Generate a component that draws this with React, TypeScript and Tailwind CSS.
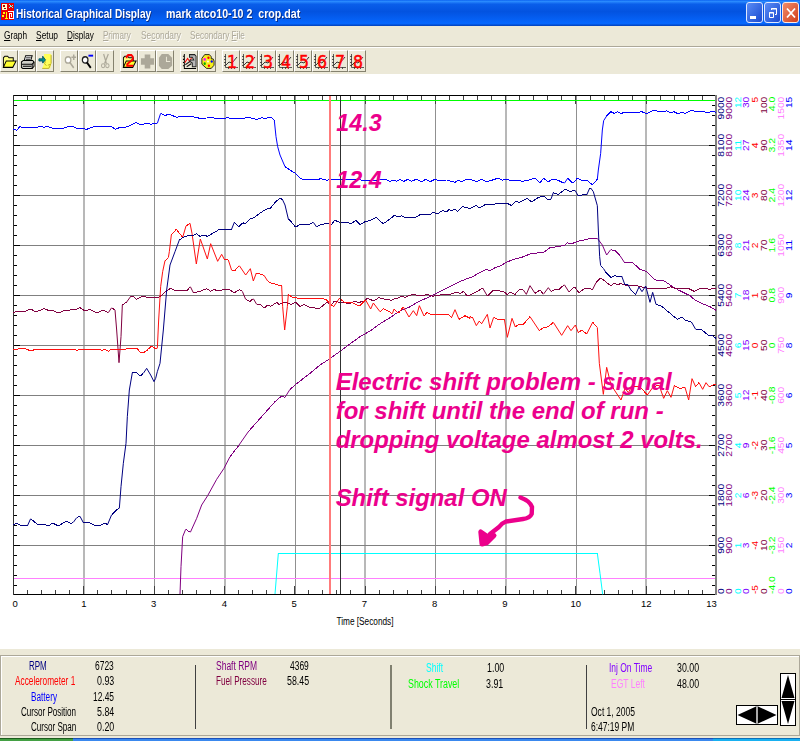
import { useLayoutEffect, useRef, useState, type ReactNode } from "react";

/* Text squeezed or stretched horizontally to an exact width. */
function Fit({ w, className = "", children }: { w: number; className?: string; children: ReactNode }) {
  const ref = useRef<HTMLSpanElement>(null);
  const [scale, setScale] = useState(1);
  useLayoutEffect(() => {
    if (ref.current) setScale(w / ref.current.offsetWidth);
  }, [w]);
  return (
    <span className={"block shrink-0 whitespace-pre " + className} style={{ width: w }}>
      <span ref={ref} className="inline-block origin-left" style={{ transform: `scaleX(${scale})` }}>
        {children}
      </span>
    </span>
  );
}

/* ---------- trace data: each run is [originX, originY, points in thirds of a pixel] ---------- */
type Run = [number, number, string];

const battery: Run[] = [
  [0, 90, "40,118 50,121 60,109 68,114 77,112 100,112 104,114 123,109 133,112 143,109 158,115 190,115 206,109 216,109 236,117 245,115 260,118 284,109 292,111 306,109 333,109 347,118 360,112 378,111 392,106 408,97 422,105 440,100 453,103 460,100 472,100 482,70 495,76 509,73 530,82 540,79 573,79 600,85 620,84 633,81 645,85 676,85 683,82"],
  [230, 90, "0,85 40,85 53,82 80,88 95,83 105,86 117,82 125,83 133,92 138,140 143,170 150,195 165,230 180,240 196,250 215,268 265,268 272,266 292,271 300,268 390,268 395,271 440,271 450,268 470,270 480,274 490,271 500,274 510,269 522,274 533,268 545,274 558,268 575,275 587,268 600,275 615,268 625,271 650,270 675,277 685,270 695,275 710,267"],
  [470, 90, "0,268 20,275 35,268 48,275 65,271 85,264 97,271 110,267 120,271 142,270 158,274 182,269 195,264 209,279 221,265 235,276 247,267 262,270 283,280 293,265 308,280 322,265 333,270 350,270 367,284 382,268 385,240 392,190 397,120 401,92 410,78 423,65 432,70 443,65 453,70 462,68 500,68 515,65 530,71 550,61 578,66 590,62 602,68 612,65 625,72 637,66 645,70 665,61 680,65 700,65 715,68 725,63 738,67"],
];
const rpm: Run[] = [
  [0, 350, "40,524 50,520 60,525 82,528 92,506 112,523 133,523 145,528 158,519 175,528 198,514 213,520 220,517 230,503 240,499 250,518 266,517 288,528 303,525 312,520 323,523 335,494 348,481 358,475 363,410 370,340 378,280 382,200 388,120 397,68 408,67 421,78 430,70 440,55 452,75 462,95 467,85 472,65 480,40 484,0"],
  [0, 90, "490,720 500,600 510,525 525,485 538,450 550,442 565,436 580,436 589,431 600,439 608,435 623,439 640,429 655,420 680,417"],
  [230, 90, "5,417 13,397 27,410 38,398 45,401 62,386 72,383 95,366 112,356 122,354 138,334 152,324 158,330 165,345 175,387 185,397 197,412 207,405 238,403 250,397 260,411 272,404 295,400 303,405 314,391 328,396 365,400 377,391 390,404 405,395 420,392 440,382 450,393 460,401 480,387 493,376 505,381 515,377 527,383 558,381 570,374 603,372 610,366 622,372 637,362 650,365 657,359 665,362 675,357 683,364 698,350"],
  [470, 90, "0,356 18,346 29,354 45,344 65,345 80,340 112,340 125,347 137,334 148,337 172,325 185,336 205,322 221,318 232,328 243,327 250,308 265,313 285,298 300,304 315,301 325,318 345,312 350,315 358,297 362,294 370,305 382,347 385,420 389,500 392,527 400,535 407,546 423,562 435,556 445,561 455,558 465,585 473,583 484,602 497,613 507,591 516,605 527,588 540,637 548,607 558,643 575,649 622,688 635,681 645,690 665,697 677,718 695,719 715,736 728,737 738,745"],
];
const accel: Run[] = [
  [0, 90, "40,780 68,774 78,777 93,783 106,778 220,778 230,781 240,778 300,778 305,782 315,778 325,784 333,778 345,780 358,778 370,779 385,775 410,774 420,786 432,787 445,778 455,768 463,774 472,775 476,690 482,590 488,545 495,512 505,503 508,485 514,435 529,418 548,442 558,408 570,400 576,430 589,522 601,447 622,507 632,461 653,514 665,493 673,508 685,510 695,541 705,541 718,527 737,555 751,536 760,573 769,549 792,556 803,573"],
  [230, 90, "120,578 155,588 158,650 164,720 172,650 175,613 185,621 210,626 280,626 290,630 303,644 311,650 328,625 345,638 365,637 388,648 407,630 422,657 430,639 450,665 460,656 475,663 487,671 492,657 505,670 520,651 537,681 550,662 560,677 568,647 582,678 591,667 605,674 655,674 665,682 675,659 687,688 705,677 720,685 738,706 748,692 758,697 771,675 781,715 792,685 810,685"],
  [500, 90, "0,686 10,683 -5,683"],
];
const accelTail: Run[] = [
  [470, 90, "0,680 8,683 19,707 28,693 35,701 52,673 60,714 71,682 80,687 103,687 112,742 126,685 136,711 145,704 158,705 180,680 208,722 220,713 235,710 250,697 275,736 293,707 303,722 316,705 325,728 335,720 350,732 368,697 382,712 388,820"],
  [260, 360, "1030,103 1040,22 1052,70 1063,90 1083,120 1095,85 1105,98 1115,80 1140,80 1162,105 1180,80 1197,75 1211,115 1222,92 1233,112 1243,77 1260,85 1275,82 1286,120 1296,56 1307,80 1317,68 1328,88 1338,68 1347,80 1368,72"],
];
const accelHead: Run[] = [accel[0], [230, 90, accel[1][2].split(" 738,706")[0]]];
const fuel: Run[] = [
  [0, 90, "40,668 52,663 72,665 93,657 106,666 133,656 150,663 158,661 175,669 195,661 228,659 240,653 253,662 270,659 293,669 308,660 325,668 335,653 345,660 350,720 357,818 363,740 367,645 380,636 393,618 402,621 410,628 430,618 440,622 475,623 482,618 498,604 512,595 527,603 550,601 560,603 571,590 580,608 600,604 620,596 632,604 642,599 655,602 685,597 703,608 718,599 727,604 737,628 750,634 760,626 770,643 780,643"],
  [230, 90, "103,654 112,645 122,649 140,637 147,643 165,636 183,643 197,636 210,649 222,643 237,651 268,656 290,637 303,645 313,634 335,638 360,640 375,634 385,638 405,632 412,625 432,633 447,622 455,626 485,631 495,625 503,625 515,618 525,622 547,613 577,618 590,613 608,619 640,613 655,615 680,606 690,611 700,604 712,618"],
  [470, 90, "5,613 17,607 38,594 52,618 70,601 100,604 112,614 120,607 135,613 150,597 160,600 169,613 180,587 195,610 210,600 220,613 235,593 243,604 255,598 265,600 283,584 297,606 313,590 327,608 345,594 357,596 368,598 378,578 392,563 408,576 423,588 432,580 445,584 452,580 470,587 490,585 520,592 545,597 560,594 590,594 602,590 620,597 655,595 672,604 695,594 720,598 738,594"],
];
const shaft: Run[] = [
  [0, 350, "540,732 543,650 548,560 557,538 571,547 590,505 605,465 623,437 650,388 672,355 690,320 715,288 745,245 785,200 825,155 845,138 855,142 870,118 895,97 930,70 960,45"],
  [230, 90, "297,808 330,784 365,758 390,740 422,722 440,708 460,695 485,680 507,664 537,652 560,638 590,624 620,610 655,592 690,574"],
  [470, 90, "0,563 10,560 20,552 50,538 60,542 75,533 90,528 107,518 125,510 155,502 185,490 220,488 240,473 270,469 285,465 292,458 303,462 320,455 345,449 370,444 382,445 397,465 410,495 422,479 435,482 450,497 463,517 487,517 510,538 530,545 557,571 580,571 605,588 625,600 660,617 675,630 700,642 720,650 738,661"],
];
const shift: Run[] = [
  [0, 350, "825,732 835,610"],
  [260, 360, "1012,580 1020,640 1028,703"],
];

/* Flat segments stay crisp; steep ones are smoothed. */
function Trace({ runs, color }: { runs: Run[]; color: string }) {
  const pts = runs.flatMap(([ox, oy, s]) =>
    s.split(" ").map((p) => {
      const [x, y] = p.split(",").map(Number);
      return [ox + x / 3, oy + y / 3];
    })
  );
  let flat = "";
  let steep = "";
  for (let i = 1; i < pts.length; i++) {
    const [x0, y0] = pts[i - 1];
    const [x1, y1] = pts[i];
    const seg = `M${x0.toFixed(2)} ${y0.toFixed(2)}L${x1.toFixed(2)} ${y1.toFixed(2)}`;
    if (Math.abs(y1 - y0) > Math.abs(x1 - x0) * 1.3) steep += seg;
    else flat += seg;
  }
  return (
    <g fill="none" stroke={color}>
      <path d={flat} shapeRendering="crispEdges" />
      <path d={steep} />
    </g>
  );
}

const scales: { x: number; color: string; labels: string }[] = [
  { x: 721, color: "#000080", labels: "9000 8100 7200 6300 5400 4500 3600 2700 1800 900 0" },
  { x: 729.4, color: "#800080", labels: "9000 8100 7200 6300 5400 4500 3600 2700 1800 900 0" },
  { x: 738, color: "#00ffff", labels: "12 11 10 8 7 6 5 4 2 1 0" },
  { x: 746.5, color: "#8000ff", labels: "30 27 24 21 18 15 12 9 6 3 0" },
  { x: 755, color: "#ff0000", labels: "5 4 3 2 1 0 -1 -2 -3 -4 -5" },
  { x: 763.6, color: "#800040", labels: "100 90 80 70 60 50 40 30 20 10 0" },
  { x: 772.2, color: "#00ff00", labels: "4.0 3.2 2.4 1.6 0.8 0 -0.8 -1.6 -2.4 -3.2 -4.0" },
  { x: 780.8, color: "#ff80ff", labels: "1500 1350 1200 1050 900 750 600 450 300 150 0" },
  { x: 789.3, color: "#0000ff", labels: "15 14 12 11 9 8 6 5 3 2 0" },
];

const textLen = (s: string) => [...s].reduce((n, c) => n + (c === "-" || c === "." ? 3.2 : 5.7), 0);

const timeLabels: [string, number][] = [
  ["0", 15.2], ["1", 84], ["3", 153.7], ["4", 224.3], ["5", 294.2], ["7", 364.5],
  ["8", 434.7], ["9", 505], ["10", 575.7], ["12", 646.2], ["13", 711.5],
];

const notes: [string, number, number, number][] = [
  ["14.3", 336.3, 131, 45.5],
  ["12.4", 336.3, 188.3, 45.5],
  ["Electric shift problem - signal", 335.7, 390, 336],
  ["for shift until the end of run -", 335.7, 419, 328],
  ["dropping voltage almost 2 volts.", 335.7, 448, 367],
  ["Shift signal ON", 335.7, 505.5, 171],
];

function Chart() {
  const verticals = Array.from({ length: 9 }, (_, i) => 84 + i * 70.3);
  const minorX = Array.from({ length: 49 }, (_, i) => 27.6 + i * 14.06);
  const minorY = Array.from({ length: 49 }, (_, i) => 105 + i * 10);
  return (
    <svg className="block shrink-0" width="800" height="575" viewBox="0 74 800 575">
      <rect x="0" y="74" width="800" height="575" fill="#fff" />
      {verticals.map((x, i) => (
        <rect key={i} x={i % 2 ? Math.round(x - 0.4) : Math.floor(x - 0.6)} y="96" width={i % 2 ? 1 : 2} height="498" fill={i % 2 ? "#909090" : "#b8b8b8"} shapeRendering="crispEdges" />
      ))}
      {Array.from({ length: 9 }, (_, i) => (
        <rect key={i} x="14" y={145 + i * 50} width="701" height="1" fill="#808080" shapeRendering="crispEdges" />
      ))}
      {minorX.map((x, i) => {
        const major = i % 5 === 4;
        return (
          <g key={i} fill="#404040" shapeRendering="crispEdges">
            <rect x={Math.floor(x)} y="96" width="1" height={major ? 8 : 4} />
            <rect x={Math.floor(x)} y={major ? 586 : 590} width="1" height={major ? 8 : 4} />
          </g>
        );
      })}
      {minorY.map((y, i) => {
        const major = i % 5 === 4;
        return (
          <g key={i} fill="#000" shapeRendering="crispEdges">
            <rect x="14" y={y} width={major ? 6 : 3} height="1" />
            <rect x={major ? 709 : 712} y={y} width={major ? 6 : 3} height="1" />
          </g>
        );
      })}
      <rect x="13" y="95" width="703" height="1" fill="#000" />
      <rect x="13" y="594" width="703" height="1" fill="#000" />
      <rect x="13" y="95" width="1" height="500" fill="#303030" />
      <rect x="715" y="95" width="2" height="500" fill="#808080" />
      <rect x="14" y="100" width="701" height="1" fill="#00ff00" />
      <rect x="14" y="578" width="701" height="1" fill="#ff80ff" />
      <Trace runs={[shift[0]]} color="#00ffff" />
      <Trace runs={[shift[1]]} color="#00ffff" />
      <rect x="278" y="553" width="320" height="1" fill="#00ffff" />
      <Trace runs={shaft} color="#800080" />
      <Trace runs={fuel} color="#800040" />
      <Trace runs={[...accelHead, ...accelTail]} color="#ff1010" />
      <Trace runs={rpm} color="#000080" />
      <Trace runs={battery} color="#0000ff" />
      <rect x="329" y="96" width="2" height="498" fill="#ff7b7b" />
      <rect x="340" y="96" width="1" height="498" fill="#303030" />

      <g fontFamily="Liberation Sans, Arial, sans-serif" fontSize="8.2">
        {scales.map((s) =>
          s.labels.split(" ").map((t, i) => {
            const len = textLen(t);
            const y = i === 0 ? 96.7 + len : i === 10 ? 594 : 145.3 + (i - 1) * 50 + len / 2;
            return (
              <text key={s.x + "-" + i} transform={`translate(${s.x + 2.9} ${y}) rotate(-90)`} textLength={len} lengthAdjust="spacingAndGlyphs" fill={s.color}>
                {t}
              </text>
            );
          })
        )}
      </g>
      <g fontFamily="Liberation Sans, Arial, sans-serif" fontSize="9.5" textAnchor="middle" fill="#000">
        {timeLabels.map(([t, x]) => (
          <text key={t} x={x} y="607">{t}</text>
        ))}
      </g>
      <text x="336.5" y="625" textLength="57" lengthAdjust="spacingAndGlyphs" fontFamily="Liberation Sans, Arial, sans-serif" fontSize="10" fill="#000">Time [Seconds]</text>

      <g fontFamily="Liberation Sans, Arial, sans-serif" fontWeight="bold" fontStyle="italic" fontSize="23.5" fill="#ec008c">
        {notes.map(([t, x, y, len]) => (
          <text key={t} x={x} y={y} textLength={len} lengthAdjust="spacingAndGlyphs">{t}</text>
        ))}
      </g>
      <g fill="none" stroke="#ec008c" strokeLinecap="round" strokeLinejoin="round">
        <path strokeWidth="4.4" d="M520.5 497.5 Q530 501 532 507 L531.700 514 Q530 518 523 519 L506 521.500 Q502 523 499 527 L490 534 L483 543" />
        <path strokeWidth="5" d="M480.800 532 L482 544 L487 542.500 L494 535.500 L488 537 Z" fill="#ec008c" />
      </g>
    </svg>
  );
}

/* ---------- toolbar glyphs, drawn on a 16x16 grid ---------- */
function Folder({ children }: { children?: ReactNode }) {
  return (
    <>
      <path d="M1.5 13.5V4.5L3 3h3l1.500 1.500H12v3" fill="#ffff80" stroke="#000" />
      <path d="M1.500 13.500L4.500 7.500h10.500l-3.500 6z" fill="#ffff30" stroke="#000" />
      {children}
    </>
  );
}
const glyphs: Record<string, ReactNode> = {
  open: <Folder />,
  print: (
    <>
      <path d="M4.500 7L6 2.500h7L11.500 7" fill="#fff" stroke="#000" />
      <path d="M6.500 4.500h5M6 6h5" stroke="#000" strokeWidth=".8" />
      <path d="M1.500 8.500L3.500 7h10l1.500 1.500v4l-2 2h-10l-1.500-1z" fill="#d0d0c8" stroke="#000" />
      <path d="M2 10.500h11l2-2M13 10.500v4M3 12.500h9" stroke="#000" fill="none" />
    </>
  ),
  exit: (
    <>
      <path d="M6.500 1H14v9.500l-1 4H4.500L6 11z" fill="#ffff58" />
      <path d="M8 8l-1 2 2 2M4.500 14.500h7l2-4-3 1M14 2v8" stroke="#b8a820" strokeWidth=".9" fill="none" />
      <path d="M1 5.500h4V3l3 3.500-3 3V7.500H1z" stroke="#005060" strokeWidth=".9" fill="#009090" />
    </>
  ),
  zoomIn: (
    <>
      <circle cx="6.500" cy="6.500" r="3" stroke="#aca899" fill="#fff" strokeWidth="1.300" />
      <path d="M8.500 9l4 5M10 4h5M12.500 1.500v5" stroke="#aca899" strokeWidth="1.600" />
    </>
  ),
  zoomOut: (
    <>
      <circle cx="5.500" cy="6.500" r="3" stroke="#222" fill="#fff" strokeWidth="1.300" />
      <path d="M7.500 9l4 5" stroke="#000" strokeWidth="2" />
      <path d="M9 2.500h5" stroke="#0000ff" strokeWidth="1.800" />
    </>
  ),
  cut: (
    <>
      <path d="M6 1l3 9M11 1L7 10" stroke="#aca899" strokeWidth="1.300" />
      <circle cx="5.500" cy="12" r="1.800" stroke="#aca899" fill="none" />
      <circle cx="10" cy="12" r="1.800" stroke="#aca899" fill="none" />
    </>
  ),
  open2: (
    <Folder>
      <path d="M5 5V3.500L6.500 2h3.500l1.500 1.500V6L5.500 10.500V12H12" stroke="#f00" strokeWidth="1.900" fill="none" />
    </Folder>
  ),
  plus: <path d="M5 1.500h6V5h4v6h-4v3.500H5V11H1V5h4z" fill="#aca899" />,
  pie: (
    <>
      <path d="M4 1h7l4 3.500V12l-4 3H4l-3-3V4.500z" fill="#aca899" />
      <path d="M9 3.500V8h4" stroke="#ece9d8" fill="none" />
    </>
  ),
  wrench: (
    <>
      <path d="M2.500 1v13.500H15M1 3h2M1 6h2M1 9h2M1 12h2" stroke="#000" fill="none" />
      <path d="M3 9l3-4 2 3 3-5" stroke="#f00" fill="none" />
      <path d="M8 1.500h5.500L15 3v10H11V9.500L8.500 8V6.500h4L11 4H8z" fill="#b8b8b8" stroke="#222" />
      <path d="M3.500 11l5-3M5 13l5-3" stroke="#222" strokeWidth="1.200" />
    </>
  ),
  palette: (
    <>
      <path d="M5 1.500h5l2 2v2h2l1 2v4l-3 3H7l-5-4V5z" fill="#f5ee20" stroke="#000" strokeWidth=".8" />
      <circle cx="5" cy="6" r="1.300" fill="#f0f" />
      <circle cx="9" cy="4.500" r="1.200" fill="#f00" />
      <circle cx="12.500" cy="8" r="1.200" fill="#00f" />
      <circle cx="5" cy="10" r="1.200" fill="#0a0" />
      <circle cx="9.500" cy="12" r="1.200" fill="#f00" />
      <circle cx="8.500" cy="8" r="1" fill="#fff" />
    </>
  ),
};

function ToolButton({ children }: { children: ReactNode }) {
  return (
    <div className="flex h-[22px] w-[18px] items-center justify-center border border-t-white border-l-white border-r-[#85826f] border-b-[#85826f] bg-[#ece9d8]">
      {children}
    </div>
  );
}

function Glyph({ name }: { name: string }) {
  return (
    <svg width="15" height="17" viewBox="0 0 16 16" preserveAspectRatio="none" fill="none">
      {glyphs[name]}
    </svg>
  );
}

function GraphNumber({ n }: { n: number }) {
  return (
    <svg width="16" height="18" viewBox="0 0 16 18">
      <path d="M2.500 2v13.500H15M1 4.500h2M1 7.500h2M1 10.500h2M1 13.500h2M5.500 15v2M8.500 15v2M11.500 15v2" stroke="#333" strokeWidth=".8" fill="none" />
      <path d="M3 13l3-3 3 1 5-6" stroke="#222" strokeWidth=".9" fill="none" />
      <text x="4" y="15.500" fontFamily="DejaVu Sans, sans-serif" fontSize="17" stroke="#f00" strokeWidth=".5" fill="#f00" textLength="10" lengthAdjust="spacingAndGlyphs">{n}</text>
    </svg>
  );
}

function Menu({ w, text, u, off }: { w: number; text: string; u: number; off?: boolean }) {
  return (
    <Fit w={w} className={off ? "text-[#aca899] [text-shadow:1px_1px_0_#fff]" : "text-black"}>
      {text.slice(0, u)}
      <span className="underline underline-offset-1">{text[u]}</span>
      {text.slice(u + 1)}
    </Fit>
  );
}

function Row({ pad, w, label, value, vw, gap, color, h = "h-[15px]" }: { pad: string; w: number; label: string; value: string; vw: number; gap: string; color: string; h?: string }) {
  return (
    <div className={`flex ${h} ${pad}`}>
      <Fit w={w} className={color}>{label}</Fit>
      <div className={gap}>
        <Fit w={vw} className="text-black">{value}</Fit>
      </div>
    </div>
  );
}

const toolGroups = [
  ["open", "print", "exit"],
  ["zoomIn", "zoomOut", "cut"],
  ["open2", "plus", "pie"],
  ["wrench", "palette"],
];

export default function App() {
  return (
    <div className="flex h-[741px] w-[800px] flex-col overflow-hidden bg-[#ece9d8] font-['Liberation_Sans',Arial,sans-serif]">
      {/* title bar */}
      <header className="flex h-[26px] shrink-0 items-center bg-[linear-gradient(#0a60f0_0%,#2b8cff_5%,#0a5eea_16%,#0353e0_45%,#0560f4_75%,#0668ff_90%,#0340b8_100%)]">
        <svg className="-mt-[3px] ml-[1px]" width="13" height="17" viewBox="0 0 13 17" shapeRendering="crispEdges">
          <rect width="13" height="17" fill="#e80000" />
          <path d="M1 1h5v6H1z" fill="#ffc" />
          <path d="M2 2h2v2H2zM3 5h2v1H3z" fill="#a00" />
          <path d="M8 1h1v1h1v1h1v-1h1v1h-1v1h1v1h-1v-1H9v1H8v-1h1V2H8z" fill="#6ff" />
          <path d="M2 9h2v2H2zM5 9h1v6H5zM1 12h2v2H1zM4 15h3v1H4z" fill="#ff0" />
          <path d="M7 8h5v7H8v-5h2v4" fill="none" stroke="#fff" />
        </svg>
        <Fit w={135} className="ml-[2px] text-[13.5px] font-bold leading-[27px] text-white [text-shadow:1px_1px_0_#0a2a80]">Historical Graphical Display</Fit>
        <Fit w={134} className="ml-[15px] text-[13.5px] font-bold leading-[27px] text-white [text-shadow:1px_1px_0_#0a2a80]">mark atco10-10 2  crop.dat</Fit>
        <div className="mr-[1px] -mt-px ml-auto flex gap-px">
          <div className="flex h-[21px] w-[17px] rounded-[3px] border border-[#dfe8ff] bg-linear-to-br from-[#5b8cf5] to-[#1a48d0]">
            <div className="mt-[13px] ml-[3px] h-[3px] w-[6px] bg-white" />
          </div>
          <div className="flex h-[21px] w-[17px] items-center justify-center rounded-[3px] border border-[#dfe8ff] bg-linear-to-br from-[#5b8cf5] to-[#1a48d0]">
            <svg width="10" height="12" viewBox="0 0 10 12" fill="none" stroke="#fff">
              <path d="M3.500 3V1.500h5v6H7M3 2h6" />
              <path d="M1.500 5.500h4v5h-4zM1 6h5" />
            </svg>
          </div>
          <div className="flex h-[21px] w-[17px] items-center justify-center rounded-[3px] border border-[#ffe8e0] bg-linear-to-br from-[#f08a68] to-[#d03c14]">
            <svg width="10" height="12" viewBox="0 0 10 12" stroke="#fff" strokeWidth="1.800">
              <path d="M1 1.500l8 9M9 1.500l-8 9" />
            </svg>
          </div>
        </div>
      </header>

      {/* menu bar */}
      <nav className="flex h-[21px] shrink-0 items-start gap-[9px] border-b border-[#aca899] pl-1 text-[11.5px] leading-[19px]">
        <Menu w={23} text="Graph" u={0} />
        <Menu w={22} text="Setup" u={0} />
        <Menu w={27} text="Display" u={0} />
        <Menu w={28} text="Primary" u={0} off />
        <div className="ml-px"><Menu w={40} text="Secondary" u={2} off /></div>
        <Menu w={55} text="Secondary File" u={10} off />
      </nav>

      {/* toolbar */}
      <div className="flex h-[27px] shrink-0 gap-[6px] border-t border-white pt-[2px]">
        {toolGroups.map((names) => (
          <div key={names[0]} className="flex">
            {names.map((g) => (
              <ToolButton key={g}><Glyph name={g} /></ToolButton>
            ))}
          </div>
        ))}
        <div className="flex">
          {[1, 2, 3, 4, 5, 6, 7, 8].map((n) => (
            <ToolButton key={n}><GraphNumber n={n} /></ToolButton>
          ))}
        </div>
      </div>

      <Chart />

      {/* readouts */}
      <footer className="flex h-[92px] shrink-0 flex-col pt-[6px]">
        <div className="flex h-[81px] border border-[#aca899] text-[12px] leading-[15px] shadow-[inset_1px_1px_0_#fff]">
          <div className="w-[194px] pt-[3px]">
            <Row pad="pl-[28px]" w={18} label="RPM" value="6723" vw={19} gap="ml-[48px]" color="text-[#000080]" />
            <Row pad="pl-[14px]" w={60} label="Accelerometer 1" value="0.93" vw={17} gap="ml-[22px]" color="text-[#ff0000]" h="h-4" />
            <Row pad="pl-[30px]" w={26} label="Battery" value="12.45" vw={21} gap="ml-[36px]" color="text-[#0000ff]" />
            <Row pad="pl-[20px]" w={55} label="Cursor Position" value="5.84" vw={17} gap="ml-[21px]" color="text-black" />
            <Row pad="pl-[30px]" w={45} label="Cursor Span" value="0.20" vw={17} gap="ml-[21px]" color="text-black" />
          </div>
          <div className="mt-[9px] h-16 w-px bg-[#404040]" />
          <div className="w-[194px] pt-[3px]">
            <Row pad="pl-[20px]" w={41} label="Shaft RPM" value="4369" vw={19} gap="ml-[33px]" color="text-[#800080]" />
            <Row pad="pl-[20px]" w={51} label="Fuel Pressure" value="58.45" vw={22} gap="ml-[20px]" color="text-[#800040]" />
          </div>
          <div className="mt-[9px] h-16 w-[2px] bg-[#808070]" />
          <div className="w-[194px] pt-[5px]">
            <Row pad="pl-[34px]" w={17} label="Shift" value="1.00" vw={17} gap="ml-[44px]" color="text-[#00ffff]" h="h-4" />
            <Row pad="pl-[16px]" w={51} label="Shock Travel" value="3.91" vw={17} gap="ml-[27px]" color="text-[#00ff00]" />
          </div>
          <div className="mt-[9px] h-16 w-px bg-[#404040]" />
          <div className="w-[148px] pt-[5px]">
            <Row pad="pl-[22px]" w={43} label="Inj On Time" value="30.00" vw={22} gap="ml-[25px]" color="text-[#8000ff]" h="h-4" />
            <Row pad="pl-[24px]" w={34} label="EGT Left" value="48.00" vw={22} gap="ml-[32px]" color="text-[#ff80ff]" h="h-7" />
            <Fit w={44} className="ml-[4px] h-[15px]">Oct 1, 2005</Fit>
            <Fit w={43} className="ml-[4px]">6:47:19 PM</Fit>
          </div>
          <div className="flex items-start">
            <svg className="mt-[49px] ml-px" width="42" height="20" viewBox="0 0 42 20">
              <rect x=".5" y=".5" width="41" height="19" fill="#fff" stroke="#000" />
              <path d="M1.500 10L20 1.500v17zM40.500 10L22 1.500v17z" />
              <path d="M21 1v18" stroke="#555" />
            </svg>
            <svg className="mt-[17px] ml-[2px]" width="16" height="53" viewBox="0 0 16 53">
              <rect x=".5" y=".5" width="15" height="52" fill="#fff" stroke="#000" />
              <path d="M8 2L14.500 25h-13zM8 51L14.500 28h-13z" />
              <path d="M1 26.500h14" stroke="#000" />
            </svg>
          </div>
        </div>
        <div className="mt-[2px] flex h-[3px]">
          <div className="w-[73px] border-t border-[#1d5c1d] bg-[#43a043]" />
          <div className="w-[640px] border-t border-[#1c50b8] bg-[#3a88ee]" />
          <div className="flex-1 border-t border-[#0c70b8] bg-[#18b0f0]" />
        </div>
      </footer>
    </div>
  );
}
